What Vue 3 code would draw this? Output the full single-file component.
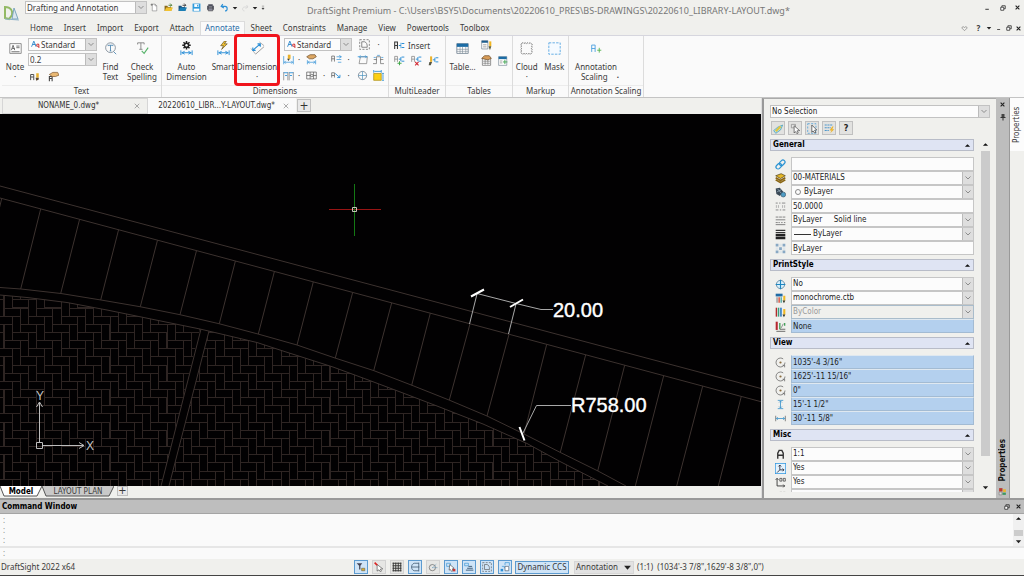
<script setup>
import { h } from 'vue'

const glyphs = {
  logo: '<path d="M1 2c6 0 8 4 7 8l-3 4-4-1z" fill="none" stroke="#93b964" stroke-width="2"/><path d="M10 3l4 11H8z" fill="#dbe6ee" stroke="#7ba5be" stroke-width="1"/><path d="M1 14l14 1" stroke="#8fb3c9" stroke-width="1"/>',
  file: '<path d="M4 2h5l3 3v9H4z" fill="#fff" stroke="#777"/><path d="M9 2v3h3" fill="none" stroke="#777"/><path d="M3 1v4M1 3h4" stroke="#555"/>',
  open: '<path d="M1 14V5h5l1 2h6v7z" fill="#8a6a1c"/><path d="M1 14l3-6h12l-3 6z" fill="#f2c230"/><path d="M8 4h5M11 1l3 3-3 2" fill="none" stroke="#4a7a2c" stroke-width="1.6"/>',
  import: '<path d="M1 14V5h5l1 2h6v7z" fill="#1c4f78"/><path d="M1 14l3-6h12l-3 6z" fill="#1b7fb5"/><path d="M8 4h5M11 1l3 3-3 2" fill="none" stroke="#333" stroke-width="1.6"/>',
  save: '<path d="M1 1h14v14H1z" fill="#2e9bdc"/><path d="M4 2h8v5H4z" fill="#fff"/><path d="M3 10h10v4H3z" fill="#fff"/><path d="M9 3h2v3H9z" fill="#2e9bdc"/>',
  print: '<path d="M4 2h8v3H4zM2 5h12v7H2z" fill="#4d4f5c"/><path d="M4 9h8v5H4z" fill="#889" stroke="#444"/><path d="M5 7h6" stroke="#ddd"/>',
  undo: '<path d="M5 2L2 6l5 3M3 6h6c5 0 5 8 0 8" fill="none" stroke="#2b8fd6" stroke-width="2"/>',
  redo: '<path d="M11 2l3 4-5 3M13 6H7c-5 0-5 8 0 8" fill="none" stroke="#d2d2d2" stroke-width="1.5"/>',
  tri: '<path d="M2 5h12l-6 7z" fill="#222"/>',
  triUp: '<path d="M2 11h12L8 5z" fill="#111"/>',
  more: '<path d="M5 3h6M5 8h6l-3 4z" fill="#333" stroke="#333"/>',
  note: '<path d="M1 2h14v12H1z" fill="#fff" stroke="#777"/><path d="M3 10l2-6 2 6M4 8h3M9 5h4M9 7h4M3 12h10" fill="none" stroke="#555"/>',
  style: '<path d="M1 12L5 2l4 10M3 8h5" fill="none" stroke="#2a86c8" stroke-width="1.6"/><path d="M14 14V9a2 2 0 1 0-1 2" fill="none" stroke="#d33b3b" stroke-width="1.8"/>',
  editText: '<path d="M1 13V4h5v9M1 8h5" fill="none" stroke="#555" stroke-width="1.6"/><path d="M10 2h4v7h-4z" fill="#eab22d"/><path d="M9 9h5v3l-4 2z" fill="#5a4530"/>',
  handText: '<path d="M2 15V8h4v7M2 11h4" fill="none" stroke="#444" stroke-width="1.6"/><path d="M2 5l5-3h7l2 4-5 2H6z" fill="#e9b873" stroke="#7d552a"/>',
  find: '<circle cx="8" cy="7" r="6" fill="none" stroke="#687787" stroke-width=".9"/><path d="M5 5V4h6v1M8 4v7M7 11h2M12 12l3 3" fill="none" stroke="#3f7eac"/>',
  check: '<path d="M2 3V1h8v2M6 1v8M4 9h4" fill="none" stroke="#777"/><path d="M7 11l3 3 5-7" fill="none" stroke="#57b36a" stroke-width="1.4"/>',
  gearDim: '<path d="M8 0v9M3.500 4.500h9M4.800 1.300l6.400 6.400M11.200 1.300L4.800 7.700" stroke="#222" stroke-width="1.600"/><circle cx="8" cy="4.500" r="3" fill="#222"/><circle cx="8" cy="4.500" r="1.300" fill="#fff"/><path d="M2 10v5M14 10v5M3 12.500h10M6 11l-3 1.500L6 14M10 11l3 1.500-3 1.500" fill="none" stroke="#2b8fd6"/>',
  boltDim: '<path d="M9 0L5 5h3L6 9l6-6H9l2-3z" fill="#f5c431" stroke="#5b4a1d" stroke-width=".7"/><path d="M2 10v5M14 10v5M3 12.500h10M6 11l-3 1.500L6 14M10 11l3 1.500-3 1.500" fill="none" stroke="#2b8fd6"/>',
  slantDim: '<path d="M1 8l5 6M10 1l5 4" stroke="#999" stroke-width=".8"/><path d="M3 10l8-7M3 7v3h3M8 3h3v3" fill="none" stroke="#2b8fd6" stroke-width="1.200"/><path d="M6 14l9-8" stroke="#999" stroke-width="1"/>',
  dimEdit: '<path d="M1 3v12M15 3v12M2 12h12M4 10l-2 2 2 2M12 10l2 2-2 2" fill="none" stroke="#2b8fd6"/><path d="M7 1h4v6H7z" fill="#eab22d"/><path d="M6 7h4l-2 3z" fill="#443"/>',
  handDim: '<path d="M1 4l5-3h7l2 3-5 3H5z" fill="#dca763" stroke="#6c4a25"/><path d="M2 9v6M14 9v6M3 12h10M5 10l-2 2 2 2M11 10l2 2-2 2" fill="none" stroke="#2b8fd6"/>',
  align: '<path d="M1 11V3h4v8M1 7h4" fill="none" stroke="#555"/><path d="M8 4h7M8 8h7M12 2l3 2-3 2M10 12h5" fill="none" stroke="#2b8fd6"/>',
  split: '<path d="M1 3v12M7 3v12M9 3v12M15 3v12" stroke="#777"/><path d="M1 4h6M9 4h6M3 8h3M10 8h3" stroke="#2b8fd6" stroke-width="1.300"/>',
  tol: '<path d="M1 3h14v10H1zM6 3v10M11 3v10M1 8h5M11 8h4" fill="none" stroke="#555"/><circle cx="8.500" cy="8" r="1.800" fill="none" stroke="#555"/>',
  leader: '<path d="M1 11V4h4v7M1 8h4" fill="none" stroke="#555"/><path d="M6 5l7 6M13 7v4H9" fill="none" stroke="#2b8fd6" stroke-width="1.300"/>',
  slant: '<path d="M3 14L5 4h10l-1 10z" fill="none" stroke="#777"/><path d="M1 4h14M5 2L3 4l2 2M12 2l2 2-2 2" fill="none" stroke="#2b8fd6"/>',
  jog: '<path d="M0 14h5V8H1M16 14h-5V8h4M5 9V4h6v5" fill="none" stroke="#666"/><path d="M1 5h3M12 5h3M6 2h4" stroke="#2b8fd6"/>',
  center: '<circle cx="8" cy="8" r="6" fill="none" stroke="#5c6f80"/><path d="M8 2v12M2 8h12" stroke="#4b91be" stroke-width="1"/>',
  area: '<path d="M1 5h11v10H1z" fill="#fcd016" stroke="#a88a12"/><path d="M1 0v4M12 0v4M2 2h10" stroke="#2b8fd6" stroke-width="1.200"/><path d="M13 5h3M13 15h3M14.500 6v8" stroke="#2b8fd6" stroke-width="1.200"/>',
  region: '<path d="M1 1h14v14H1z" fill="none" stroke="#555" stroke-dasharray="3 2"/><path d="M4 12V4h4c3 1 4 3 4 8z" fill="none" stroke="#555"/>',
  ml: '<path d="M1 13V3h4v10M1 8h4" fill="none" stroke="#333" stroke-width="1.500"/><path d="M7 8h3M11 5h4M11 11h4" fill="none" stroke="#2b8fd6" stroke-width="1.600"/><path d="M10 4v8" stroke="#2b8fd6"/>',
  mlAdd: '<path d="M1 10V2h4v8M1 6h4" fill="none" stroke="#777"/><path d="M7 6h3M11 3h4M11 9h4M10 3v6" fill="none" stroke="#2b8fd6" stroke-width="1.400"/><path d="M8 9v6M5 12h6" stroke="#42a84b" stroke-width="1.500"/>',
  mlDel: '<path d="M1 10V2h4v8M1 6h4" fill="none" stroke="#777"/><path d="M7 6h3M11 3h4M11 9h4M10 3v6" fill="none" stroke="#2b8fd6" stroke-width="1.400"/><path d="M6 10l5 5M11 10l-5 5" stroke="#d22b35" stroke-width="1.600"/>',
  mlEdit: '<path d="M3 2h3v8H3z" fill="#eab22d"/><path d="M2 10h4l-2 5H1z" fill="#554"/><path d="M7 7h3M11 4h4M11 10h4M10 4v6" fill="none" stroke="#2b8fd6" stroke-width="1.400"/>',
  table: '<path d="M1 2h14v12H1z" fill="#fff" stroke="#708090"/><path d="M1 2h14v4H1z" fill="#1c6ca5"/><path d="M1 9h14M1 11.500h14M5 6v8M8 6v8M12 6v8" stroke="#83919c" stroke-width=".8"/>',
  tableEdit: '<path d="M1 1h9v12H1z" fill="#fff" stroke="#708090"/><path d="M1 1h9v3H1z" fill="#1c5c8d"/><path d="M3 7h5M3 10h5" stroke="#777"/><path d="M12 2h3v7h-3z" fill="#f1b621"/><path d="M11 9h4l-2 6z" fill="#553"/>',
  tableHand: '<path d="M2 5h12v10H2z" fill="#fff" stroke="#666"/><path d="M3 9h10M3 12h10M6 6v8M10 6v8" stroke="#777"/><path d="M1 5l4-4h7l3 4-5 2z" fill="#d79c58" stroke="#6c4a25"/>',
  tableLink: '<path d="M1 1h13v14H1z" fill="#fff" stroke="#708090"/><path d="M1 1h13v4H1z" fill="#1c6ca5"/><path d="M3 8h4M3 11h4" stroke="#777"/><path d="M11 6v7M8 9.500h7" stroke="#43a653" stroke-width="1.500"/>',
  cloud: '<path d="M2 2q1.500-2 3 0q1.500-2 3 0q1.500-2 3 0q1.500-2 3 0q2 1.500 0 3q2 1.500 0 3q2 1.500 0 3q2 1.500 0 3q-1.500 2-3 0q-1.500 2-3 0q-1.500 2-3 0q-1.500 2-3 0q-2-1.500 0-3q-2-1.500 0-3q-2-1.500 0-3q-2-1.500 0-3z" fill="none" stroke="#555" stroke-width="1" stroke-dasharray="2.500 1"/>',
  mask: '<path d="M1 1h14v14H1z" fill="#f5faff" stroke="#4a9fe0" stroke-dasharray="3 1.500"/>',
  anno: '<path d="M1 13V3h5v10M1 8h5" fill="none" stroke="#4a9fe0" stroke-width="1.300"/><path d="M12 7v7M9 10.500h6" stroke="#54b34e" stroke-width="1.300"/>',
  min: '<path d="M3 11h8v2H3z" fill="#222"/>',
  restore: '<path d="M5 6V2h9v8h-4" fill="none" stroke="#222" stroke-width="2"/><path d="M2 6h8v8H2z" fill="#fff" stroke="#222" stroke-width="2"/>',
  close: '<path d="M2 2l12 12M14 2L2 14" stroke="#222" stroke-width="3.500"/>',
  closeThin: '<path d="M2 2l12 12M14 2L2 14" stroke="#777" stroke-width="1.600"/>',
  heart: '<path d="M8 13L2 7c0-4 5-4 6-1 1-3 6-3 6 1z" fill="none" stroke="#777" stroke-width="1.400"/>',
  chev: '<path d="M3 5l5 5 5-5" fill="none" stroke="#777" stroke-width="1.600"/>',
  eraser: '<path d="M1 11l6-5 7-3-3 7-7 5z" fill="#b6e1ec" stroke="#3a99b5"/><path d="M4 12l7-7" stroke="#e3c53b" stroke-width="3"/>',
  pick: '<path d="M2 2h6v5H2z" fill="none" stroke="#888"/><path d="M6 4l8 7-4 .500 2 3-2 1-2-3-2 2z" fill="#fff" stroke="#444"/>',
  pickBox: '<path d="M1 1h12v14H1z" fill="none" stroke="#3b98d8" stroke-dasharray="3 2"/><path d="M7 3l7 7-3 .500 2 3-2 1-2-3-2 2z" fill="#fff" stroke="#333"/>',
  quick: '<path d="M1 3h12M1 7h9M1 11h6" stroke="#4c97cc" stroke-width="1.600" stroke-dasharray="3 1"/><path d="M12 5l-4 6h3l-2 4 6-6h-3l2-4z" fill="#edb52d"/>',
  link: '<g transform="rotate(-45 8 8)" fill="none" stroke="#2c94d3" stroke-width="1.800"><rect x="0" y="5" width="9" height="6" rx="3"/><rect x="7" y="5" width="9" height="6" rx="3"/></g>',
  layers: '<path d="M1 4l8-3 6 3-7 4z" fill="#e5b827" stroke="#4a3b0e"/><path d="M1 7l7 4 7-4M1 10l7 4 7-4" fill="none" stroke="#8a6510" stroke-width="2.500"/>',
  colors: '<path d="M1 2l6-1 5 6-5 6-5-3z" fill="#3a4956"/><path d="M4 3l5 6M3 7l6-3" stroke="#9fb4c4"/><circle cx="12" cy="11" r="3.500" fill="#4f9cc4" stroke="#33566b"/>',
  ltScale: '<path d="M1 3h3M6 3h2M10 3h5M1 13h4M7 13h2M11 13h4" stroke="#888" stroke-width="1.400"/><path d="M2 6v4M5 6v4M11 6v4M14 6v4" stroke="#999"/>',
  ltype: '<path d="M1 3h4M6 3h4M11 3h4M1 7h14M1 11h3M5 11h2M9 11h2M13 11h2M1 14h14" stroke="#777" stroke-width="1.300"/>',
  lweight: '<path d="M1 2h14M1 5h14" stroke="#333" stroke-width="1.500"/><path d="M1 7h14v3H1zM1 11h14v4H1z" fill="#222"/>',
  transp: '<path d="M1 1h4v4H1zM11 1h4v4h-4zM6 6h4v4H6zM1 11h4v4H1zM11 11h4v4h-4z" fill="#88a8c4"/><path d="M6 1h4v4H6zM1 6h4v4H1zM11 6h4v4h-4zM6 11h4v4H6z" fill="#dfe6ea"/>',
  globe: '<circle cx="8" cy="8" r="6" fill="#d9f0fb" stroke="#3a6b8a"/><path d="M8 1v14M1 8h14" stroke="#1d86c1" stroke-width="1.600"/>',
  ctb: '<path d="M1 1h10v4H1z" fill="#1f6aa5"/><path d="M2 6h2v8H2z" fill="#999"/><path d="M5 6h2v8H5z" fill="#d94b36"/><path d="M8 6h2v8H8z" fill="#50a9a1"/><path d="M12 4h3v7h-3z" fill="#efb823"/><path d="M11 11h4l-2 4z" fill="#332"/>',
  ctb2: '<path d="M1 1h2v13H1z" fill="#b32b2b"/><path d="M4 1h2v13H4z" fill="#3a9f78"/><path d="M7 1h3v13H7z" fill="#4b8dc6"/><path d="M12 3h3v8h-3z" fill="#efb823"/><path d="M11 11h4l-2 4z" fill="#332"/>',
  plot: '<path d="M1 1h3v12H1z" fill="#b7272e"/><path d="M6 3h2v9H6zM13 3h2v4h-2z" fill="#45a159"/><path d="M9 10l3-6" stroke="#666"/><path d="M2 15h13M7 12h8" stroke="#333"/>',
  orbit: '<circle cx="8" cy="8" r="6.500" fill="none" stroke="#555" stroke-width="1" stroke-dasharray="34 6"/><circle cx="8" cy="8" r="1.600" fill="#8a6c3c"/><path d="M11 12h3v3" fill="none" stroke="#555"/>',
  vdim: '<path d="M4 2h8M4 14h8M8 3v10M6 5l2-2 2 2M6 11l2 2 2-2" fill="none" stroke="#3a93cb" stroke-width="1.200"/>',
  hdim: '<path d="M1 4v8M15 4v8" stroke="#555"/><path d="M2 8h12M4 6L2 8l2 2M12 6l2 2-2 2" fill="none" stroke="#3a93cb" stroke-width="1.200"/>',
  bigA: '<path d="M4 14V6l2-4h4l2 4v8M4 9h8" fill="none" stroke="#333" stroke-width="2"/>',
  ucs: '<path d="M0 0h16v16H0z" fill="#e4f3fd" stroke="#2f96de" stroke-width="2"/><path d="M7 3v7h6M7 10l-4 4M5 5l2-2 2 2M11 8l2 2-2 2" fill="none" stroke="#223" stroke-width="1.200"/>',
  ucs0: '<path d="M3 2v11h11M1 4l2-2 2 2M12 11l2 2-2 2" fill="none" stroke="#333" stroke-width="1.300"/><path d="M7 2h3v4H7zM12 2h3v4h-3z" fill="none" stroke="#333"/>',
  pin: '<path d="M5 2h6v7H5z" fill="#444"/><path d="M3 9h10M8 9v6" stroke="#333" stroke-width="2"/>',
  props: '<path d="M2 2h6v6H2z" fill="#bb3b2f"/><path d="M9 4h5v5H9z" fill="#e8b431"/><path d="M2 9h5v5H2z" fill="#ddd" stroke="#777"/><path d="M8 10h6v4H8z" fill="#3d9762"/>',
  snap: '<path d="M1 2h9l-3 4v6H5V6z" fill="#445"/><path d="M9 10h5v4H9z" fill="#e0ad2a" stroke="#665"/>',
  cursor: '<path d="M5 4l9 7-4 .500 2 3-2 1-2-3-3 2z" fill="#fff" stroke="#444"/><path d="M1 1l4 4" stroke="#d22" stroke-width="2.500"/>',
  grid: '<path d="M2 1v14M6 1v14M10 1v14M14 1v14M1 2h14M1 6h14M1 10h14M1 14h14" stroke="#333" stroke-width="1.500"/>',
  ortho: '<path d="M14 2H7C1 3 1 13 7 14h7M14 1v14M3 8h12" fill="none" stroke="#35506a" stroke-width="1.200"/>',
  polar: '<circle cx="7" cy="9" r="5" fill="none" stroke="#555"/><path d="M7 9l7-6M7 9h8" stroke="#568db4" stroke-dasharray="2 1"/>',
  esnap: '<path d="M1 2h6v5H1z" fill="none" stroke="#2f8fd0"/><path d="M6 4l7 6-3 1 1 3-2 1-2-3-2 1z" fill="#fff" stroke="#444"/><path d="M11 11h4v4h-4z" fill="#c33"/>',
  etrack: '<path d="M1 2h6v4H1z" fill="none" stroke="#2f8fd0"/><path d="M7 7h6M5 10h9M3 13h12" stroke="#43617d" stroke-width="1.600"/>',
  qinput: '<path d="M8 5V1h7v5M3 7h4v3" fill="none" stroke="#2b8fd6"/><path d="M8 7h6v7H8z" fill="#fff" stroke="#456"/><path d="M1 11h4v4H1z" fill="#2b8fd6"/>',
}

const Icon = (p) =>
  h('svg', { viewBox: '0 0 16 16', width: p.s, height: p.s, 'aria-hidden': 'true', innerHTML: glyphs[p.n] })
Icon.props = ['n', 's']

const menus = ['Home', 'Insert', 'Import', 'Export', 'Attach', 'Annotate', 'Sheet', 'Constraints', 'Manage', 'View', 'Powertools', 'Toolbox']

const dimTools = ['dimEdit', '·', 'handDim', '', 'align', '·', 'slant', 'jog', 'split', '·', 'tol', '·', 'leader', '·', 'center', 'area']

const sections = [
  {
    title: 'General',
    rows: [
      { icon: 'link', label: 'Hyperlink', value: '' },
      { icon: 'layers', label: 'Layer', value: '00-MATERIALS', list: true },
      { icon: 'colors', label: 'Line color', value: 'ByLayer', list: true, swatch: 'dot' },
      { icon: 'ltScale', label: 'Line scale', value: '50.0000' },
      { icon: 'ltype', label: 'Line style', value: 'ByLayer\u00a0\u00a0\u00a0\u00a0\u00a0Solid line', list: true },
      { icon: 'lweight', label: 'Line weight', value: 'ByLayer', list: true, swatch: 'line' },
      { icon: 'transp', label: 'Transparency', value: 'ByLayer' },
    ],
  },
  {
    title: 'PrintStyle',
    rows: [
      { icon: 'globe', label: 'Attached to', value: 'No', list: true },
      { icon: 'ctb', label: 'Style table', value: 'monochrome.ctb', list: true },
      { icon: 'ctb2', label: 'Print style', value: 'ByColor', list: true, off: true },
      { icon: 'plot', label: 'Table type', value: 'None', ro: true },
    ],
  },
  {
    title: 'View',
    rows: [
      { icon: 'orbit', label: 'Center X', value: '1035\'-4 3/16"', ro: true },
      { icon: 'orbit', label: 'Center Y', value: '1625\'-11 15/16"', ro: true },
      { icon: 'orbit', label: 'Center Z', value: '0"', ro: true },
      { icon: 'vdim', label: 'Height', value: '15\'-1 1/2"', ro: true },
      { icon: 'hdim', label: 'Width', value: '30\'-11 5/8"', ro: true },
    ],
  },
  {
    title: 'Misc',
    rows: [
      { icon: 'bigA', label: 'Annotation scale', value: '1:1', list: true },
      { icon: 'ucs', label: 'CCS icon on', value: 'Yes', list: true },
      { icon: 'ucs0', label: 'CCS icon at origin', value: 'Yes', list: true },
      { icon: 'ucs0', label: 'CCS per viewport', value: '', list: true },
    ],
  },
]

const panelTools = ['eraser', 'pick', 'pickBox', 'quick']

const statusTools = [
  ['snap', true], ['cursor', false], ['grid', false], ['ortho', true], ['polar', false],
  ['esnap', true], ['etrack', true], ['region', true], ['qinput', true],
]

// Kerb stones between the outer line and the inner arc: [top x, bottom x, bottom y]
const joints = [
  [1.7, -19, 285], [40.7, 20.7, 289], [79.6, 60.7, 293.5], [118.6, 100.7, 300], [157.5, 140.3, 306.700],
  [196.5, 180, 314.7], [235.4, 219.3, 323.7], [274.4, 258.3, 334], [313.3, 297, 345], [352.7, 335.3, 358],
  [391.7, 373.7, 370.7], [430.3, 411.7, 385.3], [470, 449.3, 400], [509, 487, 416], [546.7, 524, 434],
  [585.7, 560.3, 452.3], [624.7, 597.7, 471], [663.7, 635.3, 486], [702.7, 676.7, 486], [741.3, 718.3, 486],
].map(([tx, bx, by]) => `M${tx} ${(198 + tx * 0.2677).toFixed(1)}L${bx} ${by}`).join('')

// Herringbone paving: each row has a flat 2x1 brick and starts an upright 1x2 brick beside it
const unit = 8.15
const bricks = (() => {
  const x0 = 4 - unit * 4
  const y0 = 308 - unit * 4
  let d = ''
  for (let r = 0; r < 28; r++) {
    for (let k = -8; k < 28; k++) {
      const x = x0 + (4 * k - r) * unit
      const y = y0 + r * unit
      if (x < -40 || x > 660) continue
      d += `M${x.toFixed(1)} ${y.toFixed(1)}h${2 * unit}v${unit}h${-2 * unit}z`
      d += `M${(x - 2 * unit).toFixed(1)} ${y.toFixed(1)}h${unit}v${2 * unit}h${-unit}z`
    }
  }
  return d
})()
</script>

<template>
  <div class="app">
    <header class="titlebar">
      <Icon n="logo" s="16" class="logo" />
      <span class="combo workspace">
        <select aria-label="Workspace"><option>Drafting and Annotation</option></select>
        <Icon n="chev" s="8" class="chev" />
      </span>
      <nav class="quick" aria-label="Quick access">
        <button v-for="n in ['file', 'open', 'import', 'save', 'print', 'undo']" :key="n" :aria-label="n"><Icon :n="n" s="9" /></button>
        <button class="slim" aria-label="Undo list"><Icon n="tri" s="6" /></button>
        <button class="redo" aria-label="Redo"><Icon n="redo" s="8" /></button>
        <button class="slim" aria-label="Redo list"><Icon n="tri" s="6" /></button>
        <button class="slim" aria-label="Customize"><Icon n="more" s="6" /></button>
      </nav>
      <h1>DraftSight Premium - C:\Users\BSY5\Documents\20220610_PRES\BS-DRAWINGS\20220610_LIBRARY-LAYOUT.dwg*</h1>
      <div class="winbtns">
        <button aria-label="Minimize"><Icon n="min" s="7" /></button>
        <button aria-label="Restore"><Icon n="restore" s="6" /></button>
        <button aria-label="Close"><Icon n="close" s="5" /></button>
      </div>
    </header>

    <div class="menubar">
      <nav aria-label="Ribbon tabs">
        <button v-for="m in menus" :key="m" :class="{ on: m === 'Annotate' }">{{ m }}</button>
      </nav>
      <div class="docbtns">
        <button aria-label="Feedback"><Icon n="heart" s="7" /></button>
        <button class="q">?</button>
        <button aria-label="Help list"><Icon n="tri" s="6" /></button>
        <button aria-label="Minimize drawing"><Icon n="min" s="6" /></button>
        <button aria-label="Restore drawing"><Icon n="restore" s="6" /></button>
        <button aria-label="Close drawing"><Icon n="close" s="5" /></button>
      </div>
    </div>

    <section class="ribbon">
      <div class="group g-text">
        <div class="body">
          <button class="big note"><Icon n="note" s="13" /><span>Note</span><span>·</span></button>
          <div class="stack">
            <span class="combo">
              <Icon n="style" s="9" class="lead" />
              <select aria-label="Text style"><option>Standard</option></select>
              <Icon n="chev" s="8" class="chev" />
            </span>
            <span class="combo">
              <select aria-label="Text height"><option>0.2</option></select>
              <Icon n="chev" s="8" class="chev" />
            </span>
            <div class="pair">
              <button aria-label="Edit text"><Icon n="editText" s="10" /></button>
              <button aria-label="Text properties"><Icon n="handText" s="11" /></button>
            </div>
          </div>
          <button class="big find"><Icon n="find" s="13" /><span>Find</span><span>Text</span></button>
          <button class="big spell"><Icon n="check" s="13" /><span>Check</span><span>Spelling</span></button>
        </div>
        <h2>Text</h2>
      </div>

      <div class="group g-dim">
        <div class="body">
          <button class="big auto"><Icon n="gearDim" s="15" /><span>Auto</span><span>Dimension</span></button>
          <button class="big smart"><Icon n="boltDim" s="15" /><span>Smart</span></button>
          <button class="big dimension"><Icon n="slantDim" s="15" /><span>Dimension</span><span>·</span></button>
          <div class="dimgrid">
            <span class="combo">
              <Icon n="style" s="9" class="lead" />
              <select aria-label="Dimension style"><option>Standard</option></select>
              <Icon n="chev" s="8" class="chev" />
            </span>
            <button class="end" aria-label="Boundary"><Icon n="region" s="11" /></button>
            <span>·</span>
            <template v-for="(t, i) in dimTools" :key="i">
              <button v-if="t.length > 1" :aria-label="t"><Icon :n="t" s="11" /></button>
              <span v-else>{{ t }}</span>
            </template>
          </div>
        </div>
        <h2>Dimensions</h2>
      </div>

      <div class="group g-ml">
        <div class="body col">
          <button class="wide"><Icon n="ml" s="11" /><span>Insert</span></button>
          <div class="trio">
            <button aria-label="Add leader"><Icon n="mlAdd" s="11" /></button>
            <button aria-label="Remove leader"><Icon n="mlDel" s="11" /></button>
            <button aria-label="Leader style"><Icon n="mlEdit" s="11" /></button>
          </div>
        </div>
        <h2>MultiLeader</h2>
      </div>

      <div class="group g-tab">
        <div class="body">
          <button class="big"><Icon n="table" s="13" /><span>Table...</span></button>
          <div class="quad">
            <button aria-label="Edit table"><Icon n="tableEdit" s="11" /></button>
            <span></span>
            <button aria-label="Table style"><Icon n="tableHand" s="11" /></button>
            <button aria-label="Link table"><Icon n="tableLink" s="10" /></button>
          </div>
        </div>
        <h2>Tables</h2>
      </div>

      <div class="group g-mark">
        <div class="body">
          <button class="big"><Icon n="cloud" s="13" /><span>Cloud</span><span>·</span></button>
          <button class="big"><Icon n="mask" s="13" /><span>Mask</span></button>
        </div>
        <h2>Markup</h2>
      </div>

      <div class="group g-anno">
        <div class="body">
          <button class="big"><Icon n="anno" s="11" /><span>Annotation</span><span class="more">Scaling <b>·</b></span></button>
        </div>
        <h2>Annotation Scaling</h2>
      </div>
    </section>

    <main>
      <section class="work">
        <nav class="doctabs" aria-label="Drawings">
          <div class="tab t0"><button class="name">NONAME_0.dwg*</button><button aria-label="Close NONAME_0"><Icon n="closeThin" s="6" /></button></div>
          <div class="tab t1"><button class="name">20220610_LIBR...Y-LAYOUT.dwg*</button><button aria-label="Close LIBRARY-LAYOUT"><Icon n="closeThin" s="6" /></button></div>
          <button class="plus" aria-label="New drawing">+</button>
        </nav>

        <svg class="canvas" role="img" aria-label="Library layout drawing">
          <defs>
            <clipPath id="paving">
              <path d="M0 295L27 297.500L67 302.500L107 310L200 329L161 486H0zM209 331L257 342.500L283 351L333 367L367 379.500L403 393L437 406L483 424L510 436L527 443.500L560 461.500L608 486H169z" />
            </clipPath>
          </defs>
          <g transform="translate(0,-114)">
            <path class="brick" :d="bricks" clip-path="url(#paving)" />
            <g class="kerb">
              <path d="M0 186L761 388.500M0 198L761 401.700" />
              <path d="M0 287.500L21 289L61 293.500L101 300L140 306.700L180 314.700L219 323.700L258 334L297 345L335 358L374 370.700L412 385.300L449 400L487 416L524 434L560 452.300L598 471L626 486" />
              <path d="M0 295L27 297.500L67 302.500L107 310L200 329L257 342.500L283 351L333 367L367 379.500L403 393L437 406L483 424L510 436L527 443.500L560 461.500L608 486" />
              <path d="M201 329L161 486M209 331L169 486" />
              <path :d="joints" />
            </g>
            <path class="cross-x" d="M329 209.500H381" />
            <path class="cross-y" d="M354.500 184V236" />
            <path class="pickbox" d="M352.500 207.500h4v4h-4z" />
            <g class="ucs">
              <path d="M36.500 442.500h6v6h-6zM39.500 442V402M36.500 407l3-5 3 5M43 445.500H84M79 442.500l5 3-5 3" />
              <text x="40" y="400" text-anchor="middle">Y</text>
              <text x="90" y="450" text-anchor="middle">X</text>
            </g>
            <g class="dim">
              <path d="M477 293.500L516 303.500L541 309.500H553M477 294L469.500 324M516 304L508.500 334M571 405.500H536.500L523 433" />
              <path class="tick" d="M471 296.500L484 289.500M510 307L523 299.500M519.500 427L524.500 440.500" />
              <text x="553" y="317">20.00</text>
              <text x="571" y="412">R758.00</text>
            </g>
          </g>
        </svg>

        <nav class="sheets" aria-label="Sheets">
          <button class="sheet on"><svg viewBox="0 0 42 11" preserveAspectRatio="none" aria-hidden="true"><path d="M0 0L4 10H37L42 0" /></svg><span>Model</span></button>
          <button class="sheet plan"><svg viewBox="0 0 72 11" preserveAspectRatio="none" aria-hidden="true"><path d="M0 0L4 10H67L72 0" /></svg><span>LAYOUT PLAN</span></button>
          <button class="plus" aria-label="New sheet">+</button>
        </nav>
      </section>

      <aside class="panel">
        <span class="combo picksel">
          <select aria-label="Selection"><option>No Selection</option></select>
          <Icon n="chev" s="8" class="chev" />
        </span>
        <div class="ptools">
          <button v-for="p in panelTools" :key="p" :aria-label="p"><Icon :n="p" s="11" /></button>
          <button>?</button>
        </div>
        <div class="scroller">
          <div class="props">
            <section v-for="s in sections" :key="s.title">
              <h3>{{ s.title }}<Icon n="triUp" s="7" /></h3>
              <div v-for="(r, i) in s.rows" :key="i" class="row">
                <label :for="s.title + i" :title="r.label"><Icon :n="r.icon" s="11" /></label>
                <span v-if="r.list" class="combo" :class="{ off: r.off }">
                  <i v-if="r.swatch" :class="r.swatch"></i>
                  <select :id="s.title + i" :disabled="r.off"><option>{{ r.value }}</option></select>
                  <Icon n="chev" s="8" class="chev" />
                </span>
                <input v-else :id="s.title + i" type="text" :value="r.value" :readonly="r.ro" :class="{ ro: r.ro }" />
              </div>
            </section>
          </div>
          <div class="vscroll">
            <Icon n="triUp" s="7" />
            <div class="thumb"></div>
            <Icon n="tri" s="7" />
          </div>
        </div>
      </aside>

      <div class="dockbar">
        <button aria-label="Close panel"><Icon n="close" s="5" /></button>
        <button aria-label="Pin panel"><Icon n="pin" s="8" /></button>
        <strong>Properties</strong>
        <Icon n="props" s="9" />
      </div>
      <div class="sidetabs"><button>Properties</button></div>
    </main>

    <section class="command">
      <header>
        <h2>Command Window</h2>
        <button aria-label="Float"><Icon n="restore" s="6" /></button>
        <button aria-label="Close command window"><Icon n="close" s="5" /></button>
      </header>
      <div class="log">
        <div class="lines"><p>:</p><p>:</p><p>:</p></div>
        <div class="lscroll"><Icon n="triUp" s="7" /><div class="thumb"></div><Icon n="tri" s="7" /></div>
      </div>
      <div class="prompt"><label for="cmd">:</label><input id="cmd" type="text" /></div>
    </section>

    <footer>
      <span class="ver">DraftSight 2022 x64</span>
      <div class="stools">
        <button v-for="[n, on] in statusTools" :key="n" :class="{ on }" :aria-label="n"><Icon :n="n" s="10" /></button>
      </div>
      <button class="ccs on">Dynamic CCS</button>
      <span class="combo scale">
        <select aria-label="Scale list"><option>Annotation</option></select>
        <Icon n="tri" s="8" class="chev" />
      </span>
      <span class="coords">(1:1)&nbsp; (1034'-3 7/8",1629'-8 3/8",0")</span>
    </footer>
  </div>
</template>

<style>
body { margin: 0; overflow: hidden; }
</style>

<style scoped>
.app {
  display: flex;
  flex-direction: column;
  height: 100vh;
  background: #f0f0ed;
  color: #3a3a3a;
  font: 8px/10px "Noto Sans", "Open Sans", sans-serif;
  box-sizing: border-box;
  border-bottom: 1px solid #444;
}
.app * { box-sizing: border-box; }
svg { display: block; flex: none; }
button {
  display: flex;
  align-items: center;
  justify-content: center;
  margin: 0;
  padding: 0;
  border: 0;
  background: none;
  color: inherit;
  font: inherit;
  white-space: nowrap;
}
h1, h2, h3, p { margin: 0; font: inherit; white-space: nowrap; }

.combo {
  display: flex;
  align-items: center;
  height: 13px;
  border: 1px solid #c2c2c2;
  background: #fcfcfc;
  min-width: 0;
}
.combo select, input {
  flex: 1;
  min-width: 0;
  width: 100%;
  height: 100%;
  margin: 0;
  padding: 0 1px;
  border: 0;
  border-radius: 0;
  outline: 0;
  appearance: none;
  background: none;
  color: inherit;
  font: inherit;
  opacity: 1;
}
.combo .lead { margin-left: 2px; }
.combo .chev {
  width: 11px;
  height: 100%;
  padding: 1px;
  border-left: 1px solid #bbb;
  background: #dedede;
}

.titlebar { display: flex; height: 21px; padding: 1px 3px 0 4px; flex: none; }
.logo { margin: 4px 5px 0 0; }
.workspace { width: 122px; flex: none; }
.quick { display: flex; align-items: center; height: 13px; }
.quick button { width: 14px; }
.quick .slim { width: 8px; }
.quick .redo { width: 12px; }
.titlebar h1 {
  flex: 1;
  padding: 4px 0 0 40px;
  color: #777;
  font-size: 9px;
  line-height: 12px;
}
.winbtns { display: flex; gap: 8px; height: 13px; }
.winbtns button { width: 7px; }

.menubar { display: flex; justify-content: space-between; height: 14px; padding: 0 2px 0 25px; flex: none; }
.menubar nav { display: flex; gap: 1px; }
.menubar nav button { padding: 0 5px; }
.menubar nav .on { background: #fafafa; box-shadow: inset 1px 1px #dcdcdc, inset -1px 0 #dcdcdc; color: #2d6fa8; }
.docbtns { display: flex; align-items: center; gap: 3px; }
.docbtns button { width: 7px; }
.docbtns .q { margin-left: 4px; font-weight: 700; }

.ribbon {
  display: flex;
  height: 63px;
  flex: none;
  padding-left: 2px;
  border-top: 1px solid #d6d6de;
  border-bottom: 1px solid #c4c4c4;
  background: #fafafa;
}
.group { display: flex; flex-direction: column; border-right: 1px solid #dcdcdc; padding-top: 2px; flex: none; }
.group h2 { height: 12px; border-top: 1px solid #ececec; text-align: center; line-height: 9px; }
.body { display: flex; flex: 1; min-height: 0; }
.big { flex-direction: column; justify-content: flex-start; position: relative; padding-top: 3px; }
.big svg { height: 15px; margin-bottom: 6px; }
.g-text { width: 160px; }
.note { width: 26px; }
.find { width: 27px; }
.spell { width: 36px; }
.stack { display: flex; flex-direction: column; gap: 2px; width: 69px; }
.pair { display: flex; gap: 8px; padding: 3px 0 0 2px; }
.g-dim { width: 227px; }
.auto { width: 49px; }
.smart { width: 24px; }
.dimension { width: 44px; }
.dimension::after {
  content: "";
  position: absolute;
  z-index: 2;
  inset: -4px -1px -1px -1px;
  border: 3px solid #f0141c;
  border-radius: 4px;
}
.dimgrid {
  display: grid;
  grid-template-columns: 12px 10px 14px 12px 13px 11px 16px 17px;
  grid-template-rows: 13px 15px 15px;
  row-gap: 1px;
  margin-left: 3px;
  place-items: center;
}
.dimgrid .combo { grid-column: 1 / 7; width: 68px; }
.end { justify-self: end; }
.g-ml { width: 57px; }
.col { flex-direction: column; align-items: flex-start; padding: 2px 0 0 5px; }
.wide { gap: 3px; }
.trio { display: flex; gap: 6px; padding-top: 4px; }
.g-tab { width: 67px; }
.g-tab .big { width: 33px; }
.quad { display: grid; grid-template-columns: 11px 11px; grid-template-rows: 11px 11px; gap: 4px 5px; padding: 2px 0 0 2px; }
.g-mark { width: 56px; }
.g-mark .big { width: 28px; }
.g-anno { width: 75px; }
.g-anno .big { width: 54px; }
.more { padding-left: 8px; }
.more b { margin-left: 7px; }

main { display: flex; flex: 1; min-height: 0; }
.work { display: flex; flex-direction: column; flex: 1; min-width: 0; border-right: 1px solid #ddd; }
.doctabs {
  display: flex;
  height: 16px;
  flex: none;
  padding: 0 2px;
  color: #333;
  font-family: "DejaVu Sans Condensed", "DejaVu Sans", sans-serif;
}
.tab { display: flex; align-items: center; justify-content: space-between; padding-right: 7px; }
.tab .name { flex: 1; }
.t0 { width: 146px; border: 1px solid #d6d6d6; }
.t1 { width: 148px; padding-left: 2px; background: #fafafa; }
.plus { width: 14px; height: 13px; margin: 1px; border: 1px solid #c0c0c0; background: #e9e9e9; font-size: 12px; line-height: 10px; }

.canvas { flex: 1; width: 100%; min-height: 0; background: #020102; fill: none; }
.brick { stroke: #2e2523; stroke-width: 1; shape-rendering: crispEdges; }
.kerb { stroke: #3c322f; stroke-width: 1; }
.cross-x { stroke: #981414; }
.cross-y { stroke: #147814; }
.pickbox { stroke: #c6c6b8; }
.ucs { stroke: #bdbdbd; }
.ucs text { fill: #c4c4c4; stroke: none; font: 12px "Liberation Sans", sans-serif; }
.dim { stroke: #a8a8a8; }
.dim .tick { stroke: #fff; stroke-width: 2; }
.dim text { fill: #fff; stroke: #fff; stroke-width: 0.4; font: 20px "Liberation Sans", Arial, sans-serif; }

.sheets { display: flex; height: 12px; flex: none; font-family: "DejaVu Sans Condensed", "DejaVu Sans", sans-serif; }
.sheet { position: relative; width: 42px; height: 11px; }
.sheet svg { position: absolute; inset: 0; width: 100%; height: 100%; fill: #c9c9c9; stroke: #555; }
.sheet.on svg { fill: #fff; }
.sheet.on { color: #000; font-weight: 700; }
.sheet.plan { width: 72px; }
.sheet span { position: relative; }
.sheets .plus { width: 11px; height: 10px; margin: 0 3px; font-size: 11px; }

.panel {
  display: flex;
  flex-direction: column;
  width: 234px;
  flex: none;
  padding: 6px 6px 6px 6px;
  border-left: 2px solid #999;
  border-top: 1px solid #aaa;
  color: #222;
  font-family: "DejaVu Sans Condensed", "DejaVu Sans", sans-serif;
}
.picksel { flex: none; }
.ptools { display: flex; gap: 3px; padding: 3px 1px 4px; }
.ptools button { width: 14px; height: 14px; border: 1px solid #c0c0c0; background: #e2e2e0; font-weight: 700; font-size: 9px; }
.scroller { display: flex; flex: 1; gap: 6px; min-height: 0; }
.props { flex: 1; overflow: hidden; }
h3 {
  display: flex;
  align-items: center;
  justify-content: space-between;
  height: 12px;
  margin-bottom: 6px;
  padding: 0 2px;
  border: 1px solid #b8bcc8;
  background: #dfe4f3;
  color: #000;
  font-weight: 700;
}
.props section { margin-bottom: 4px; }
.row { display: flex; align-items: center; height: 14px; }
.row label { width: 21px; padding-left: 5px; flex: none; }
.row .combo, .row input { flex: 1; height: 14px; border: 1px solid #c6c6c6; background: #fcfcfc; }
.row .combo select { border: 0; background: none; }
.row input.ro { background: #b4d0ee; border-color: #a3bbd3; border-top-color: #dfe8f0; }
.row .off { background: #f0f0ed; color: #999; border-color: #a9bccb; }
.dot { width: 6px; height: 6px; margin: 0 2px 0 3px; border: 1px solid #888; border-radius: 50%; }
.line { width: 17px; height: 1px; margin: 0 1px 0 2px; background: #333; }
.vscroll { display: flex; flex-direction: column; align-items: center; gap: 3px; width: 10px; padding: 2px 0 1px; }
.vscroll .thumb { width: 9px; height: 87%; background: #cbcbcb; margin-bottom: auto; }

.dockbar {
  display: flex;
  flex-direction: column;
  align-items: center;
  gap: 6px;
  width: 14px;
  flex: none;
  padding: 4px 0 2px;
  border-right: 1px solid #999;
  background: #bdbdbd;
  color: #111;
  font-family: "DejaVu Sans Condensed", "DejaVu Sans", sans-serif;
}
.dockbar strong { margin-top: auto; writing-mode: vertical-rl; transform: rotate(180deg); }
.sidetabs { width: 14px; flex: none; }
.sidetabs button {
  width: 14px;
  height: 53px;
  background: #fcfcfc;
  writing-mode: vertical-rl;
  transform: rotate(180deg);
  font-family: "DejaVu Sans Condensed", "DejaVu Sans", sans-serif;
}

.command { flex: none; border-top: 2px solid #999; background: #fafafa; }
.command header {
  display: flex;
  align-items: center;
  gap: 6px;
  height: 14px;
  padding: 0 3px 0 2px;
  border-bottom: 1px solid #a4a4a4;
  background: #bebebe;
}
.command h2 { flex: 1; color: #000; font: 700 8px/10px "DejaVu Sans Condensed", "DejaVu Sans", sans-serif; }
.log { display: flex; justify-content: space-between; height: 34px; border-bottom: 2px solid #e6e6e6; }
.lines { padding: 1px 3px; color: #888; }
.lscroll { display: flex; flex-direction: column; align-items: center; width: 11px; padding: 1px 0; background: #f0f0f0; }
.lscroll .thumb { width: 9px; height: 6px; margin-top: auto; margin-bottom: 2px; background: #ccc; }
.prompt { display: flex; height: 11px; padding-left: 3px; color: #888; }

footer { display: flex; align-items: center; height: 16px; flex: none; padding-left: 1px; }
.ver { width: 353px; }
.stools { display: flex; gap: 4px; }
.stools button { width: 14px; height: 14px; border: 1px solid #d2d2d2; background: #e6e6e4; }
.stools .on, .ccs { border: 1px solid #5d9bd0; background: #cfe4f7; }
.ccs { width: 54px; height: 13px; margin: 0 5px 0 3px; }
.scale { width: 60px; background: #e2e2e2; border-color: #d6d6d6; margin-right: 3px; }
.scale .chev { border: 0; background: none; }
.coords { white-space: nowrap; }
</style>
